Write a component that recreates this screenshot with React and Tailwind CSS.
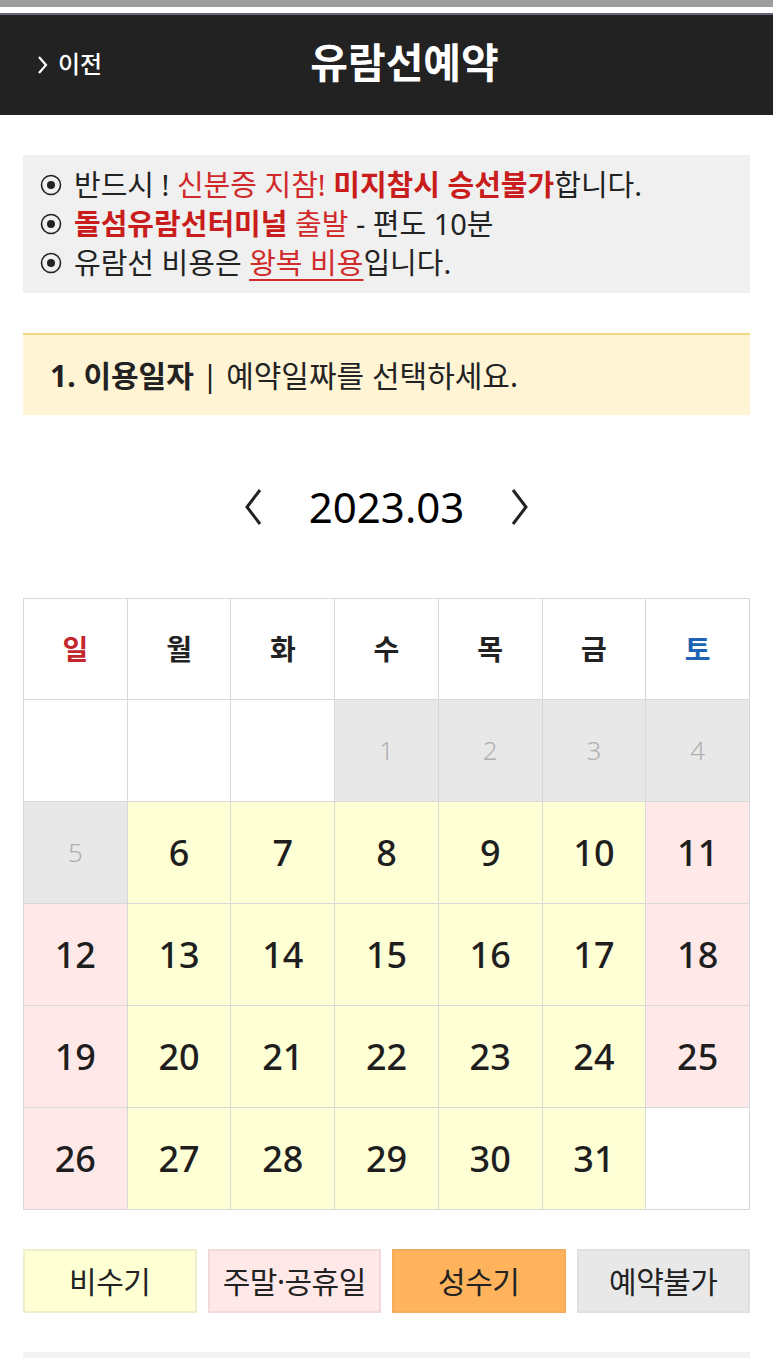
import React from "react";

const font = { fontFamily: '"Noto Sans", "Noto Sans CJK KR", sans-serif' };

const Y = "bg-[#ffffd6]";
const P = "bg-[#ffe8e8]";
const G = "bg-[#e8e8e8]";

const weeks = [
  [null, null, null, [1, "g"], [2, "g"], [3, "g"], [4, "g"]],
  [[5, "g"], [6, "y"], [7, "y"], [8, "y"], [9, "y"], [10, "y"], [11, "p"]],
  [[12, "p"], [13, "y"], [14, "y"], [15, "y"], [16, "y"], [17, "y"], [18, "p"]],
  [[19, "p"], [20, "y"], [21, "y"], [22, "y"], [23, "y"], [24, "y"], [25, "p"]],
  [[26, "p"], [27, "y"], [28, "y"], [29, "y"], [30, "y"], [31, "y"], null],
];

function Dot() {
  return (
    <svg width="22" height="22" viewBox="0 0 22 22" className="mr-[12px] shrink-0">
      <circle cx="11" cy="11" r="9.5" fill="none" stroke="#222" strokeWidth="1.6" />
      <circle cx="11" cy="11" r="4" fill="#222" />
    </svg>
  );
}

export default function App() {
  return (
    <div className="w-[773px] h-[1358px] overflow-hidden bg-white text-[#222]" style={font}>
      <div className="h-[7px] bg-[#9e9e9e]" />
      <div className="h-[6px] bg-white" />
      <div className="h-[2px] bg-[#6e6480]" />
      <header className="h-[100px] bg-[#222222] relative flex items-center justify-center">
        <div className="absolute left-[37px] top-0 h-full flex items-center text-white text-[24px] font-medium">
          <svg width="12" height="20" viewBox="0 0 12 20" className="mr-[9px]">
            <path d="M2 2 L9 10 L2 18" fill="none" stroke="white" strokeWidth="2.2" />
          </svg>
          <span className="-mt-[2px]">이전</span>
        </div>
        <h1 className="text-white text-[41px] font-bold -mt-[4px] ml-[36px]">유람선예약</h1>
      </header>

      <div className="px-[23px]">
        <div className="mt-[40px] bg-[#f0f0f0] h-[138px] pl-[17px] pt-[10px] text-[29px] leading-[39px]">
          <div className="flex items-center">
            <Dot />
            <span>
              반드시 ! <span className="text-[#d12a2a]">신분증 지참!</span>{" "}
              <span className="text-[#c91d1d] font-bold">미지참시 승선불가</span>합니다.
            </span>
          </div>
          <div className="flex items-center">
            <Dot />
            <span>
              <span className="text-[#c91d1d] font-bold">돌섬유람선터미널</span>{" "}
              <span className="text-[#d12a2a]">출발</span> - 편도 10분
            </span>
          </div>
          <div className="flex items-center">
            <Dot />
            <span>
              유람선 비용은 <span className="text-[#d12a2a] underline underline-offset-[5px]">왕복 비용</span>입니다.
            </span>
          </div>
        </div>

        <div className="mt-[40px] h-[82px] bg-[#fff4d4] border-t-[2px] border-[#f3d77c] flex items-center pl-[27px] text-[30px]">
          <span className="font-bold">1. 이용일자</span>
          <span className="ml-[8px]">| 예약일짜를 선택하세요.</span>
        </div>

        <div className="h-[183px] flex items-center justify-center">
          <svg width="22" height="40" viewBox="0 0 22 40" className="mr-[45px]">
            <path d="M18 3 L5 20 L18 37" fill="none" stroke="#222" strokeWidth="3" />
          </svg>
          <span className="text-[42px] text-black">2023.03</span>
          <svg width="22" height="40" viewBox="0 0 22 40" className="ml-[45px]">
            <path d="M4 3 L17 20 L4 37" fill="none" stroke="#222" strokeWidth="3" />
          </svg>
        </div>

        <div className="grid grid-cols-7 border-l border-t border-[#d8d8d8]">
          {["일", "월", "화", "수", "목", "금", "토"].map((d, i) => (
            <div
              key={d}
              className={`h-[101px] border-r border-b border-[#d8d8d8] flex items-center justify-center text-[28px] font-bold ${
                i === 0 ? "text-[#c4262e]" : i === 6 ? "text-[#1e64b4]" : "text-[#222]"
              }`}
            >
              {d}
            </div>
          ))}
          {weeks.flat().map((c, i) => {
            if (!c)
              return <div key={i} className="h-[102px] border-r border-b border-[#d8d8d8] bg-white" />;
            const [n, t] = c;
            const bg = t === "g" ? G : t === "y" ? Y : P;
            return (
              <div
                key={i}
                className={`h-[102px] border-r border-b border-[#d8d8d8] ${bg} flex items-center justify-center`}
              >
                {t === "g" ? (
                  <span className="text-[26px] font-light text-[#b0b0b0]">{n}</span>
                ) : (
                  <span className="text-[36px] font-medium text-[#1e1e1e]">{n}</span>
                )}
              </div>
            );
          })}
        </div>

        <div className="mt-[39px] grid grid-cols-4 gap-[11px] text-[30px] tracking-[-0.5px]">
          <div className="h-[64px] bg-[#ffffd4] border-2 border-[#eeeecc] flex items-center justify-center">비수기</div>
          <div className="h-[64px] bg-[#ffe8e8] border-2 border-[#f2dada] flex items-center justify-center">주말·공휴일</div>
          <div className="h-[64px] bg-[#ffb35c] border-2 border-[#f4ab5a] flex items-center justify-center">성수기</div>
          <div className="h-[64px] bg-[#e8e8e8] border-2 border-[#e0e0e0] flex items-center justify-center">예약불가</div>
        </div>

        <div className="mt-[39px] h-[20px] bg-[#f2f2f2]" />
      </div>
    </div>
  );
}
